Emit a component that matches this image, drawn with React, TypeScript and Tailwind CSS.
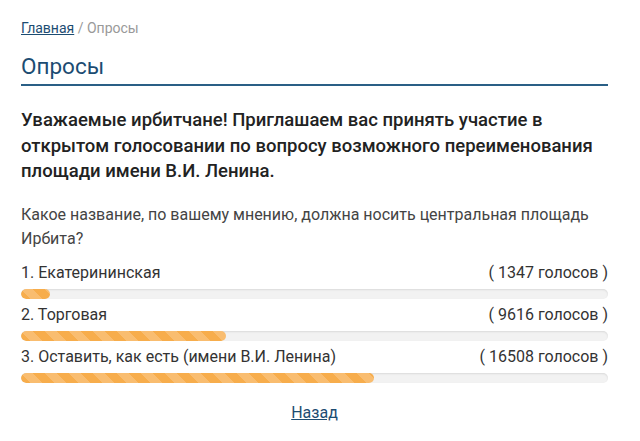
const options = [
  { title: "1. Екатерининская", votes: 1347 },
  { title: "2. Торговая", votes: 9616 },
  { title: "3. Оставить, как есть (имени В.И. Ленина)", votes: 16508 },
];

const total = options.reduce((s, o) => s + o.votes, 0);

function PollRow({ title, votes }: { title: string; votes: number }) {
  const pct = (votes / total) * 100;
  return (
    <div className="mb-[5px]">
      <div className="flex justify-between text-[16px] leading-[22px] text-[#333]">
        <span>{title}</span>
        <span>( {votes} голосов )</span>
      </div>
      <div className="mt-[5px] h-[10px] rounded-[5px] bg-[#f2f2f2] shadow-[inset_0_1px_2px_rgba(0,0,0,0.1)] overflow-hidden">
        <div
          className="h-full rounded-[5px] bg-[#f7ad4c] bg-[linear-gradient(45deg,rgba(255,255,255,.2)_25%,transparent_25%,transparent_50%,rgba(255,255,255,.2)_50%,rgba(255,255,255,.2)_75%,transparent_75%,transparent)] bg-[length:24px_24px]"
          style={{ width: `${pct}%` }}
        />
      </div>
    </div>
  );
}

export default function App() {
  return (
    <div className="w-[640px] h-[441px] bg-white font-['Roboto',sans-serif]">
      <div className="pl-[21px] pr-[32px] pt-[19px]">
        <div className="text-[14px] leading-[18px] text-[#999]">
          <a href="#" className="text-[#1c4c72] underline">Главная</a> / Опросы
        </div>
        <h1 className="mt-[14px] text-[22.5px] leading-[30px] text-[#1c4c72] pb-[3px] border-b-2 border-[#2a5f86]">
          Опросы
        </h1>
        <h2 className="mt-[22px] text-[18.5px] leading-[25.5px] font-medium text-[#222]">
          Уважаемые ирбитчане! Приглашаем вас принять участие в открытом голосовании по вопросу возможного переименования площади имени В.И. Ленина.
        </h2>
        <p className="mt-[18px] text-[16px] leading-[24px] text-[#444]">
          Какое название, по вашему мнению, должна носить центральная площадь Ирбита?
        </p>
        <div className="mt-[11px]">
          {options.map((o) => (
            <PollRow key={o.title} {...o} />
          ))}
        </div>
        <div className="mt-[20px] text-center text-[16px] leading-[20px]">
          <a href="#" className="text-[#1c4c72] underline">Назад</a>
        </div>
      </div>
    </div>
  );
}
